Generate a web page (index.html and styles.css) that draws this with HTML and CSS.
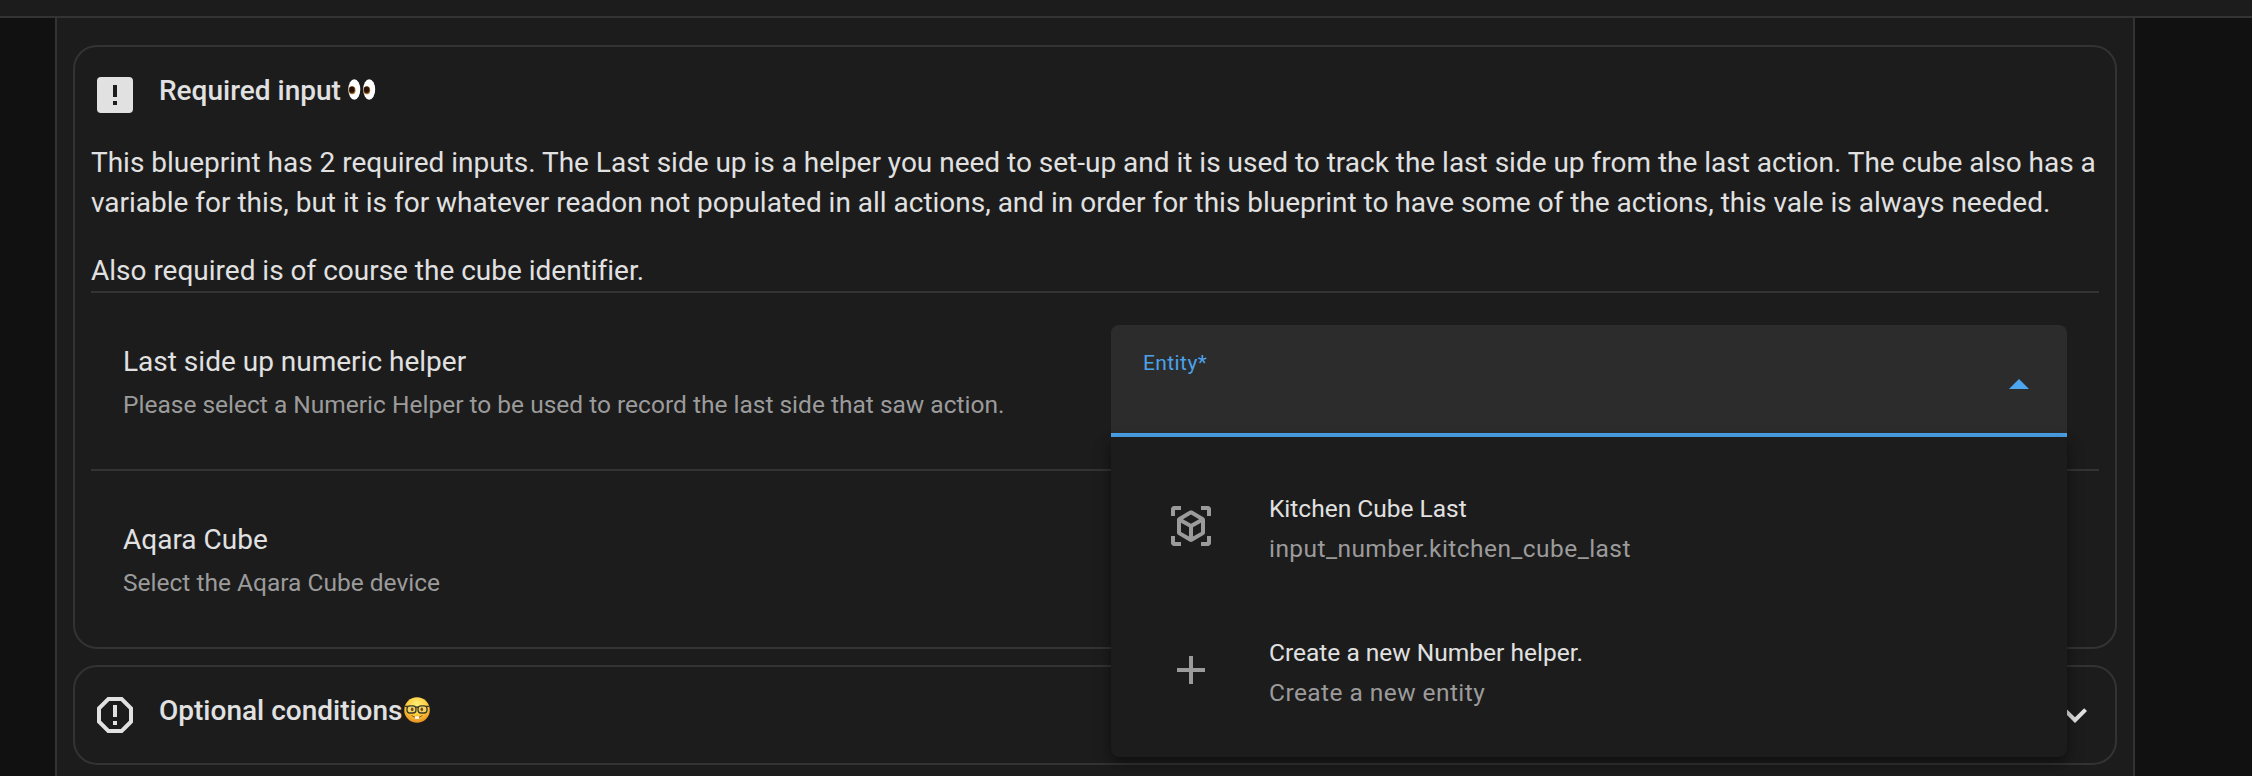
FILE: index.html
```html
<!DOCTYPE html>
<html lang="en">
<head>
<meta charset="utf-8">
<title>Blueprint inputs</title>
<link rel="stylesheet" href="styles.css">
</head>
<body>
<header class="toolbar"></header>
<main class="panel">
  <section class="card">
    <div class="card-header">
      <svg class="icon" viewBox="0 0 24 24"><path d="M13,13H11V7H13M13,17H11V15H13M19,3H5A2,2 0 0,0 3,5V19A2,2 0 0,0 5,21H19A2,2 0 0,0 21,19V5A2,2 0 0,0 19,3Z"/></svg>
      <h2 class="title">Required input <svg class="eyes" viewBox="0 0 28 21" role="img" aria-label="eyes"><ellipse cx="6.3" cy="10.5" rx="6" ry="10.3" fill="#fff"/><ellipse cx="21.2" cy="10.5" rx="6" ry="10.3" fill="#fff"/><ellipse cx="4.1" cy="11.2" rx="3.4" ry="4" fill="#9a6a2a"/><ellipse cx="18.8" cy="11.2" rx="3.4" ry="4" fill="#9a6a2a"/><ellipse cx="3.9" cy="10.7" rx="2.7" ry="3.1" fill="#2a1206"/><ellipse cx="18.6" cy="10.7" rx="2.7" ry="3.1" fill="#2a1206"/></svg></h2>
    </div>
    <div class="description">
      <p>This blueprint has 2 required inputs. The Last side up is a helper you need to set-up and it is used to track the last side up from the last action. The cube also has a<br>variable for this, but it is for whatever readon not populated in all actions, and in order for this blueprint to have some of the actions, this vale is always needed.</p>
      <p>Also required is of course the cube identifier.</p>
    </div>
    <div class="row">
      <div class="row-text">
        <div class="row-title">Last side up numeric helper</div>
        <div class="row-sub">Please select a Numeric Helper to be used to record the last side that saw action.</div>
      </div>
      <div class="picker">
        <div class="field">
          <span class="label">Entity*</span>
          <svg class="arrow" viewBox="0 0 20 10"><path d="M0 10L10 0L20 10Z"/></svg>
        </div>
        <div class="menu">
          <div class="item">
            <svg class="icon" viewBox="0 0 24 24"><path d="M17,22V20H20V17H22V20.5C22,20.89 21.84,21.24 21.54,21.54C21.24,21.84 20.89,22 20.5,22H17M7,22H3.5C3.11,22 2.76,21.84 2.46,21.54C2.16,21.24 2,20.89 2,20.5V17H4V20H7V22M17,2H20.5C20.89,2 21.24,2.16 21.54,2.46C21.84,2.76 22,3.11 22,3.5V7H20V4H17V2M7,2V4H4V7H2V3.5C2,3.11 2.16,2.76 2.46,2.46C2.76,2.16 3.11,2 3.5,2H7M13,17.25L17,14.95V10.36L13,12.66V17.25M12,10.92L16,8.63L12,6.28L8,8.63L12,10.92M7,14.95L11,17.25V12.66L7,10.36V14.95M18.23,7.59C18.73,7.91 19,8.34 19,8.91V15.23C19,15.8 18.73,16.23 18.23,16.55L12.75,19.73C12.25,20.05 11.75,20.05 11.25,19.73L5.77,16.55C5.27,16.23 5,15.8 5,15.23V8.91C5,8.34 5.27,7.91 5.77,7.59L11.25,4.41C11.5,4.28 11.75,4.22 12,4.22C12.25,4.22 12.5,4.28 12.75,4.41L18.23,7.59Z"/></svg>
            <div class="item-text"><div class="item-title">Kitchen Cube Last</div><div class="item-sub">input_number.kitchen_cube_last</div></div>
          </div>
          <div class="item">
            <svg class="icon" viewBox="0 0 24 24"><path d="M19,13H13V19H11V13H5V11H11V5H13V11H19V13Z"/></svg>
            <div class="item-text"><div class="item-title">Create a new Number helper.</div><div class="item-sub">Create a new entity</div></div>
          </div>
        </div>
      </div>
    </div>
    <div class="row">
      <div class="row-text">
        <div class="row-title">Aqara Cube</div>
        <div class="row-sub">Select the Aqara Cube device</div>
      </div>
    </div>
  </section>
  <section class="card">
    <div class="card-header">
      <svg class="icon" viewBox="0 0 24 24"><path d="M8.27,3L3,8.27V15.73L8.27,21H15.73C17.5,19.24 21,15.73 21,15.73V8.27L15.73,3M9.1,5H14.9L19,9.1V14.9L14.9,19H9.1L5,14.9V9.1M11,15H13V17H11V15M11,7H13V13H11V7"/></svg>
      <h2 class="title">Optional conditions<svg class="nerd" viewBox="0 0 26 26" role="img" aria-label="nerd face"><defs><radialGradient id="skin" cx=".5" cy=".3" r=".72"><stop offset="0" stop-color="#fff07a"/><stop offset=".55" stop-color="#fdcb3c"/><stop offset="1" stop-color="#e58a1e"/></radialGradient></defs><circle cx="13" cy="13" r="12.8" fill="url(#skin)"/><g fill="#f0d468" stroke="#3b3a26" stroke-width="1.3"><rect x="3" y="8.8" width="9" height="7.2" rx="3"/><rect x="14" y="8.8" width="9" height="7.2" rx="3"/></g><path d="M1 9.4H4M22 9.4H25M11.8 10.4Q13 9.6 14.2 10.4" fill="none" stroke="#3b3a26" stroke-width="1.4"/><ellipse cx="8.2" cy="12.3" rx="1.3" ry="1.9" fill="#7a4a12"/><ellipse cx="17.8" cy="12.3" rx="1.3" ry="1.9" fill="#7a4a12"/><path d="M7.5 18.4Q13 22.6 18.5 18.4" fill="none" stroke="#9a5312" stroke-width="1"/><rect x="11" y="19.4" width="4" height="2.4" fill="#fff"/></svg></h2>
      <svg class="icon chevron" viewBox="0 0 24 24"><path d="M7.41,8.58L12,13.17L16.59,8.58L18,10L12,16L6,10L7.41,8.58Z"/></svg>
    </div>
  </section>
</main>
</body>
</html>
```
FILE: styles.css
```css
* { box-sizing: border-box; }

body {
  margin: 0;
  height: 776px;
  overflow: hidden;
  background: #111;
  color: #e1e1e1;
  font: 28px/40px Roboto, sans-serif;
}

.toolbar {
  height: 18px;
  background: #1c1c1c;
  border-bottom: 2px solid #333;
}

.panel {
  width: 2080px;
  height: 758px;
  margin-left: 55px;
  padding: 27px 16px 0;
  display: flex;
  flex-direction: column;
  gap: 16px;
  background: #1c1c1c;
  border: 2px solid #333;
  border-width: 0 2px;
}

.card {
  flex: none;
  border: 2px solid #333;
  border-radius: 24px;
  padding: 0 16px;
}

.card-header {
  height: 96px;
  display: flex;
  align-items: center;
}

.icon {
  flex: none;
  width: 48px;
  height: 48px;
  fill: currentColor;
}

.title {
  margin: 0 0 8px 20px;
  font-size: 28px;
  font-weight: 500;
  line-height: 40px;
  height: 40px;
  white-space: pre;
}

.eyes { width: 28px; height: 21px; }
.nerd { width: 26px; height: 26px; vertical-align: -3px; margin-left: 1px; }
.chevron { margin-left: auto; }

.description { height: 148px; }

.description p {
  margin: 0 0 28px;
  white-space: nowrap;
  letter-spacing: -0.01px;
}

.row {
  height: 178px;
  padding: 32px;
  border-top: 2px solid #333;
  display: flex;
  justify-content: space-between;
}

.row-text { padding-top: 17px; }

.row-sub {
  margin-top: 3px;
  font-size: 24.5px;
  color: #9b9b9b;
}

.picker {
  position: relative;
  width: 956px;
  height: 112px;
}

.field {
  height: 112px;
  padding: 0 38px 0 32px;
  display: flex;
  justify-content: space-between;
  background: #2c2c2c;
  border-bottom: 4px solid #4ba2ea;
  border-radius: 8px 8px 0 0;
  color: #4ba2ea;
}

.label {
  padding-top: 18px;
  font-size: 21px;
  letter-spacing: 0.4px;
}

.arrow {
  width: 20px;
  height: 10px;
  margin-top: 54px;
  fill: #4da6f0;
}

.menu {
  position: absolute;
  top: 112px;
  left: 0;
  width: 956px;
  height: 320px;
  padding-top: 17px;
  background: #1c1c1c;
  border-radius: 0 0 8px 8px;
  box-shadow: 0 4px 10px rgba(0, 0, 0, .3), 0 8px 20px rgba(0, 0, 0, .2);
}

.item {
  height: 144px;
  padding-left: 56px;
  display: flex;
  align-items: center;
}

.item .icon { color: #9b9b9b; }

.item-text {
  margin-left: 54px;
  padding-top: 5px;
  font-size: 24.5px;
}

.item-sub {
  color: #9b9b9b;
  letter-spacing: 0.4375px;
}
```
